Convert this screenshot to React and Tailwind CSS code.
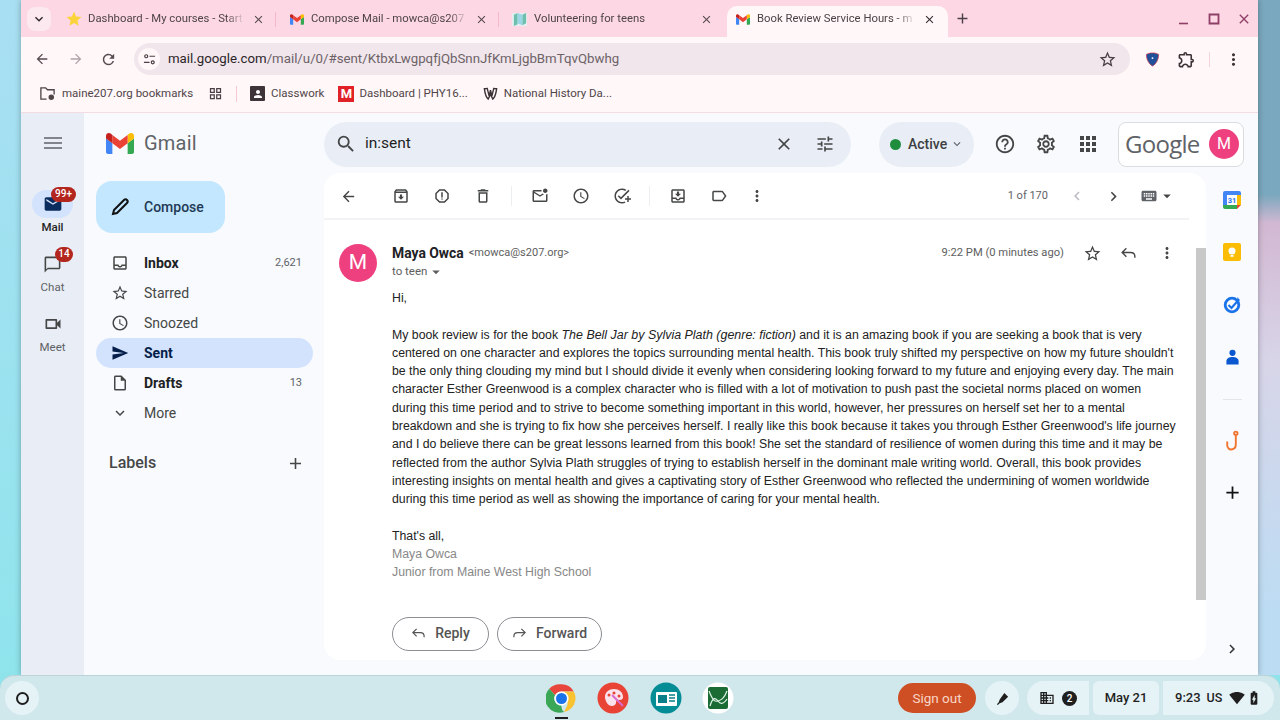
import React from "react";
import {
  MdArrowBack, MdArrowForward, MdRefresh, MdStarBorder, MdOutlineExtension, MdMoreVert, MdClose, MdAdd, MdKeyboardArrowDown,
  MdSearch, MdTune, MdHelpOutline, MdOutlineSettings, MdApps, MdOutlineArchive, MdOutlineReport, MdOutlineDelete,
  MdOutlineMarkEmailUnread, MdOutlineSchedule, MdOutlineAddTask, MdOutlineMoveToInbox, MdOutlineLabel, MdChevronLeft, MdChevronRight,
  MdKeyboard, MdArrowDropDown, MdOutlineInbox, MdSend, MdOutlineInsertDriveFile, MdOutlineChatBubbleOutline, MdOutlineVideocam, MdMail,
  MdSignalWifi4Bar, MdBatteryChargingFull, MdOutlineDomain, MdOutlineGridView, MdPerson, MdStar,
} from "react-icons/md";

const roboto = "font-['Roboto','Liberation_Sans',sans-serif]";

function GmailM({ className }) {
  return (
    <svg viewBox="52 42 88 66" className={className}>
      <path fill="#4285f4" d="M58 108h14V74L52 59v43c0 3.32 2.69 6 6 6" />
      <path fill="#34a853" d="M120 108h14c3.32 0 6-2.69 6-6V59l-20 15" />
      <path fill="#fbbc04" d="M120 48v26l20-15v-8c0-7.42-8.47-11.65-14.4-7.2" />
      <path fill="#ea4335" d="M72 74V48l24 18 24-18v26L96 92" />
      <path fill="#c5221f" d="M52 51v8l20 15V48l-5.6-4.2c-5.94-4.45-14.4-.22-14.4 7.2" />
    </svg>
  );
}

function Tab({ w, icon, title, active, sep, titleW = 155 }) {
  return (
    <div className={`h-[31px] pb-[5px] flex items-center shrink-0 ${active ? "bg-[#fff7f8] rounded-t-[10px]" : ""}`} style={{ width: w }}>
      <div className={`w-[15px] h-[15px] ml-[7px] shrink-0 flex items-center justify-center ${active ? "ml-[8px]" : ""}`}>{icon}</div>
      <div className="ml-[7px] overflow-hidden whitespace-nowrap text-[11.3px] text-[#4d4347] [mask-image:linear-gradient(to_right,black_88%,transparent)]" style={{ width: titleW }}>{title}</div>
      <MdClose className={`ml-[7px] shrink-0 w-[13px] h-[13px] ${active ? "text-[#332d30]" : "text-[#554a4f]"}`} />
      {sep && <div className="ml-[10px] w-[1px] h-[15px] bg-[#f3b9cb]" />}
    </div>
  );
}

function Bookmark({ icon, text, cls = "" }) {
  return (
    <div className={`flex items-center gap-[5px] text-[11.5px] text-[#4f4548] whitespace-nowrap ${cls}`}>
      {icon}
      <span>{text}</span>
    </div>
  );
}

function Tabs() {
  return (
    <div className={`h-[37px] bg-[#fdd7e4] flex items-end ${roboto} relative`}>
      <div className="w-[24px] h-[24px] mb-[6px] ml-[6px] mr-[6px] rounded-[8px] bg-[#fce8ef] flex items-center justify-center shrink-0">
        <MdKeyboardArrowDown className="w-[16px] h-[16px] text-[#2c2629]" />
      </div>
      <div className="flex items-center pb-0 pl-[2px]">
        <Tab w={223} sep title="Dashboard - My courses - Start" titleW={157} icon={<MdStar className="w-[18px] h-[18px] shrink-0 text-[#fbd43c]" />} />
        <Tab w={223} sep title="Compose Mail - mowca@s207" titleW={157} icon={<GmailM className="w-[14px] h-[11px]" />} />
        <Tab w={215} title="Volunteering for teens" titleW={159} icon={
          <svg viewBox="0 0 16 16" className="w-[15px] h-[15px]"><path fill="#e5eef0" d="M0 1h16v14H0z" /><path fill="#6dbfae" d="M2 3l4-2v12l-4 2zM11 3l4-2v11l-4 2z" /><path fill="#9ad6e4" d="M6 1l5 2v11l-5-2z" /></svg>
        } />
        <div className="w-[7px]" />
        <Tab w={221} active title="Book Review Service Hours - m" titleW={159} icon={<GmailM className="w-[14px] h-[11px]" />} />
      </div>
      <MdAdd className="w-[17px] h-[17px] text-[#4a3f44] ml-[6px] mb-[10px]" />
      <div className="flex-1" />
      <div className="flex items-center gap-[14px] pr-[6px] mb-[10px] text-[#8e3f66]">
        <svg viewBox="0 0 16 16" className="w-[16px] h-[16px]"><path d="M3 12.5h9" stroke="currentColor" strokeWidth="1.6" /></svg>
        <svg viewBox="0 0 16 16" className="w-[16px] h-[16px]"><path d="M3.5 3.5h9v9h-9z" fill="none" stroke="currentColor" strokeWidth="1.8" /></svg>
        <MdClose className="w-[16px] h-[16px]" />
      </div>
    </div>
  );
}

function Toolbar() {
  return (
    <div className={`h-[38px] bg-[#fff7f8] flex items-center ${roboto}`}>
      <div className="flex items-center w-[113px] pl-[13px] gap-[7px] pt-[6px] text-[#554a4f]">
        <MdArrowBack className="w-[16px] h-[16px] ml-0" />
        <MdArrowForward className="w-[16px] h-[16px] ml-[11px] text-[#b0a4a9]" />
        <MdRefresh className="w-[17px] h-[17px] ml-[9px]" />
      </div>
      <div className="w-[996px] h-[32px] mt-[6px] rounded-full bg-[#f0e6ec] flex items-center">
        <div className="w-[22px] h-[22px] rounded-full bg-[#fff7f8] ml-[4px] flex items-center justify-center">
          <svg viewBox="0 0 14 14" className="w-[13px] h-[13px]" fill="none" stroke="#4a3f44" strokeWidth="1.3"><circle cx="3.5" cy="3.5" r="1.6" /><path d="M7 3.5h6M1 10h6" /><circle cx="10.5" cy="10" r="1.6" /></svg>
        </div>
        <div className="ml-[8px] text-[13.26px] text-[#6d6267] whitespace-nowrap"><span className="text-[#2b2528]">mail.google.com</span>/mail/u/0/#sent/KtbxLwgpqfjQbSnnJfKmLjgbBmTqvQbwhg</div>
        <div className="flex-1" />
        <MdStarBorder className="w-[19px] h-[19px] text-[#4a3f44] mr-[13px]" />
      </div>
      <div className="flex items-center pt-[6px] ml-[15px]">
        <svg viewBox="0 0 16 16" className="w-[15px] h-[15px]"><path d="M8 1c3 0 5 .7 6.5 1.6C14.5 8 12 12.500 8 15 4 12.500 1.500 8 1.500 2.600 3 1.700 5 1 8 1z" fill="#21509a" stroke="#c23a4e" strokeWidth=".8" /><circle cx="8" cy="6.500" r="1" fill="#fff" /></svg>
        <MdOutlineExtension className="w-[19px] h-[19px] text-[#3b3236] ml-[17px]" />
        <div className="w-[1px] h-[15px] bg-[#f3d3dd] ml-[13px]" />
        <MdMoreVert className="w-[19px] h-[19px] text-[#3b3236] ml-[14px]" />
      </div>
    </div>
  );
}

function Bookmarks() {
  return (
    <div className={`h-[38px] bg-[#fff7f8] border-b border-[#f3dde3] flex items-center pl-[18px] ${roboto}`}>
      <Bookmark text="maine207.org bookmarks" cls="gap-[6px]" icon={
        <svg viewBox="0 0 18 18" className="w-[17px] h-[17px]" fill="none" stroke="#4f4548" strokeWidth="1.4"><path d="M8 15H2V3h5l2 2h7v5" /><circle cx="13" cy="13" r="2.200" fill="#4f4548" /></svg>
      } />
      <MdOutlineGridView className="w-[15px] h-[15px] text-[#4a3f44] ml-[15px]" />
      <div className="w-[1px] h-[16px] bg-[#f3c9d6] ml-[13px]" />
      <Bookmark cls="ml-[13px] gap-[6px]" text="Classwork" icon={<span className="w-[15px] h-[15px] bg-[#3c3438] rounded-[1px] flex items-center justify-center"><MdPerson className="w-[12px] h-[12px] text-white" /></span>} />
      <Bookmark cls="ml-[14px]" text="Dashboard | PHY16..." icon={<span className="w-[16px] h-[16px] bg-[#e02128] text-white font-bold text-[13px] leading-[16px] text-center">M</span>} />
      <Bookmark cls="ml-[15px] gap-[6px]" text="National History Da..." icon={
        <svg viewBox="0 0 16 16" className="w-[15px] h-[15px]" fill="none" stroke="#3b3236" strokeWidth="1.500"><path d="M1.500 3c1 0 2-.5 3-.5l2 8 1.500-6 1.500 6 2-8c1 0 2 .5 3 .5-.5 4-2 9-4 11l-2.500-5-2.500 5C3.500 12 2 7 1.500 3z" /></svg>
      } />
    </div>
  );
}

function RailItem({ icon, label, pill, badge, badgeCls, labelCls = "text-[#5e6165]" }) {
  return (
    <div className="flex flex-col items-center relative">
      <div className={`w-[41px] h-[28px] rounded-full flex items-center justify-center ${pill ? "bg-[#d3e3fd]" : ""}`}>{icon}</div>
      <div className={`text-[11.5px] leading-[14px] mt-[2px] ${labelCls}`}>{label}</div>
      {badge && <div className={`absolute bg-[#b3261e] text-white rounded-full text-[10px] font-medium h-[14px] leading-[14px] text-center border-0 ${badgeCls}`}>{badge}</div>}
    </div>
  );
}

function Rail() {
  return (
    <div className={`w-[63px] bg-[#e9eef6] flex flex-col items-center shrink-0 ${roboto}`}>
      <svg viewBox="0 0 18 12" className="w-[18px] h-[12px] mt-[24px]" stroke="#5f6368" strokeWidth="1.500"><path d="M0 1h18M0 6h18M0 11h18" /></svg>
      <div className="mt-[41px] flex flex-col gap-[16px]">
        <RailItem pill label="Mail" labelCls="text-[#1f1f1f] font-medium" icon={<MdMail className="w-[20px] h-[20px] text-[#0b2c5e]" />} badge="99+" badgeCls="w-[25px] -top-[3px] left-[19px] h-[15px]" />
        <RailItem label="Chat" icon={<MdOutlineChatBubbleOutline className="w-[19px] h-[19px] text-[#444746]" />} badge="14" badgeCls="w-[18px] h-[15px] -top-[3px] left-[23px]" />
        <RailItem label="Meet" icon={<MdOutlineVideocam className="w-[20px] h-[20px] text-[#444746]" />} />
      </div>
    </div>
  );
}

function NavItem({ icon, label, count, bold, active }) {
  return (
    <div className={`h-[30px] flex items-center rounded-full pl-[14px] pr-[11px] text-[14px] ${active ? "bg-[#d3e3fd] text-[#041e49] font-bold" : bold ? "text-[#202124] font-bold" : "text-[#444746]"}`}>
      <div className="w-[20px] h-[20px] flex items-center justify-center shrink-0">{icon}</div>
      <span className="ml-[14px] flex-1">{label}</span>
      {count && <span className="text-[11px] font-normal text-[#5f6368]">{count}</span>}
    </div>
  );
}

function Nav() {
  const ic = "w-[18px] h-[18px] text-[#444746]";
  return (
    <div className={`w-[240px] shrink-0 ${roboto}`}>
      <div className="h-[60px] flex items-center pl-[22px]">
        <GmailM className="w-[28px] h-[21px]" />
        <span className="ml-[10px] text-[20px] text-[#5f6368] tracking-[0.01em]">Gmail</span>
      </div>
      <div className="ml-[12px] mt-[8px] w-[129px] h-[52px] rounded-[16px] bg-[#c2e7ff] flex items-center pl-[14px]">
        <svg viewBox="0 0 20 20" className="w-[20px] h-[20px]" fill="none" stroke="#111" strokeWidth="2"><path d="M3 17l1-4L14 3c1-1 2-1 3 0s1 2 0 3L7 16z" /></svg>
        <span className="ml-[14px] text-[14px] font-medium text-[#1f3a54]">Compose</span>
      </div>
      <div className="ml-[12px] mr-[11px] mt-[15px]">
        <NavItem bold label="Inbox" count="2,621" icon={<MdOutlineInbox className={ic} />} />
        <NavItem label="Starred" icon={<MdStarBorder className={ic} />} />
        <NavItem label="Snoozed" icon={<MdOutlineSchedule className={ic} />} />
        <NavItem active label="Sent" icon={<MdSend className="w-[18px] h-[18px] text-[#041e49]" />} />
        <NavItem bold label="Drafts" count="13" icon={<MdOutlineInsertDriveFile className={ic} />} />
        <NavItem label="More" icon={<MdKeyboardArrowDown className={ic} />} />
      </div>
      <div className="ml-[25px] mr-[19px] mt-[20px] h-[30px] flex items-center justify-between text-[16px] text-[#444746]">
        <span className="font-medium">Labels</span>
        <MdAdd className="w-[19px] h-[19px]" />
      </div>
    </div>
  );
}

function Header() {
  return (
    <div className={`h-[60px] pt-[2px] flex items-center ${roboto}`}>
      <div className="w-[527px] h-[45px] rounded-full bg-[#e9eef6] flex items-center pl-[11px] pr-[16px]">
        <MdSearch className="w-[22px] h-[22px] text-[#444746]" />
        <span className="ml-[8px] text-[15.5px] text-[#1f1f1f]">in:sent</span>
        <div className="flex-1" />
        <MdClose className="w-[20px] h-[20px] text-[#444746]" />
        <MdTune className="w-[20px] h-[20px] text-[#444746] ml-[21px]" />
      </div>
      <div className="ml-[28px] w-[95px] h-[45px] rounded-full bg-[#e9eef6] flex items-center pl-[11px]">
        <span className="w-[11px] h-[11px] rounded-full bg-[#1e8e3e]" />
        <span className="ml-[7px] text-[14px] font-medium text-[#3c4043]">Active</span>
        <MdKeyboardArrowDown className="ml-[3px] w-[14px] h-[14px] text-[#5f6368]" />
      </div>
      <MdHelpOutline className="ml-[20px] w-[22px] h-[22px] text-[#444746]" />
      <MdOutlineSettings className="ml-[19px] w-[22px] h-[22px] text-[#444746]" />
      <MdApps className="ml-[19px] w-[24px] h-[24px] text-[#444746]" />
      <div className="ml-[18px] w-[126px] h-[45px] rounded-[8px] border border-[#dadce0] bg-white flex items-center pl-[6px]">
        <span className="w-[84px] text-[24px] font-medium text-[#5f6368] tracking-[-0.03em] font-['Open_Sans',sans-serif]">Google</span>
        <span className="w-[30px] h-[30px] rounded-full bg-[#ee3f7f] text-white text-[16px] flex items-center justify-center">M</span>
      </div>
    </div>
  );
}

function TbIcon({ children, cls = "w-[41px]" }) {
  return <div className={`flex items-center justify-center text-[#444746] ${cls}`}>{children}</div>;
}

function MsgToolbar() {
  const ic = "w-[18px] h-[18px]";
  return (
    <div className="h-[47px] flex items-center border-b-2 border-[#f1f3f4] mr-[17px] shrink-0 pt-[1px]">
      <MdArrowBack className="ml-[16px] w-[17px] h-[17px] text-[#444746]" />
      <div className="flex ml-[23px]">
        <TbIcon><MdOutlineArchive className={ic} /></TbIcon>
        <TbIcon><MdOutlineReport className={ic} /></TbIcon>
        <TbIcon><MdOutlineDelete className={ic} /></TbIcon>
      </div>
      <div className="w-[1px] h-[20px] bg-[#eceff1] ml-[8px]" />
      <div className="flex ml-[7px]">
        <TbIcon><MdOutlineMarkEmailUnread className={ic} /></TbIcon>
        <TbIcon><MdOutlineSchedule className={ic} /></TbIcon>
        <TbIcon><MdOutlineAddTask className={ic} /></TbIcon>
      </div>
      <div className="w-[1px] h-[20px] bg-[#eceff1] ml-[7px]" />
      <div className="flex ml-[7px]">
        <TbIcon><MdOutlineMoveToInbox className={ic} /></TbIcon>
        <TbIcon><MdOutlineLabel className={ic} /></TbIcon>
        <TbIcon cls="w-[35px]"><MdMoreVert className={ic} /></TbIcon>
      </div>
      <div className="flex-1" />
      <span className="text-[11px] mr-[1px] text-[#5f6368]">1 of 170</span>
      <MdChevronLeft className="ml-[19px] w-[18px] h-[18px] text-[#b8bcc0]" />
      <MdChevronRight className="ml-[18px] w-[19px] h-[19px] text-[#444746]" />
      <MdKeyboard className="ml-[17px] w-[18px] h-[18px] text-[#5f6368]" />
      <MdArrowDropDown className="w-[18px] h-[18px] text-[#444746]" />
      <div className="w-[13px]" />
    </div>
  );
}

const bodyLines = [
  <>My book review is for the book <i className="text-[12.45px]">The Bell Jar by Sylvia Plath (genre: fiction)</i> and it is an amazing book if you are seeking a book that is very</>,
  "centered on one character and explores the topics surrounding mental health. This book truly shifted my perspective on how my future shouldn't",
  "be the only thing clouding my mind but I should divide it evenly when considering looking forward to my future and enjoying every day. The main",
  "character Esther Greenwood is a complex character who is filled with a lot of motivation to push past the societal norms placed on women",
  "during this time period and to strive to become something important in this world, however, her pressures on herself set her to a mental",
  "breakdown and she is trying to fix how she perceives herself. I really like this book because it takes you through Esther Greenwood's life journey",
  "and I do believe there can be great lessons learned from this book! She set the standard of resilience of women during this time and it may be",
  "reflected from the author Sylvia Plath struggles of trying to establish herself in the dominant male writing world. Overall, this book provides",
  "interesting insights on mental health and gives a captivating story of Esther Greenwood who reflected the undermining of women worldwide",
  "during this time period as well as showing the importance of caring for your mental health.",
];

function ReplyGlyph({ flip, className }) {
  return (
    <svg viewBox="0 0 16 16" className={className} fill="none" stroke="currentColor" strokeWidth="1.300" style={flip ? { transform: "scaleX(-1)" } : undefined}>
      <path d="M6 3L2 7l4 4M2 7h8c2.500 0 4 1.500 4 4v1" />
    </svg>
  );
}

function Message() {
  return (
    <div className="flex-1 flex min-h-0">
      <div className="flex-1 min-w-0">
        <div className="flex pl-[15px] pt-[24px]">
          <div className="w-[38px] h-[38px] rounded-full bg-[#ee3f7f] text-white text-[21px] flex items-center justify-center shrink-0">M</div>
          <div className="ml-[15px] flex-1 -mt-[1px]">
            <div className="flex items-center h-[20px] pr-[20px]">
              <span className="text-[13.9px] font-bold text-[#202124]">Maya Owca</span>
              <span className="ml-[5px] text-[11px] text-[#5e5e5e]">&lt;mowca@s207.org&gt;</span>
              <div className="flex-1" />
              <span className="text-[11.2px] text-[#5e5e5e]">9:22 PM (0 minutes ago)</span>
              <MdStarBorder className="ml-[19px] w-[19px] h-[19px] text-[#444746]" />
              <ReplyGlyph className="ml-[18px] w-[17px] h-[17px] text-[#444746]" />
              <MdMoreVert className="ml-[21px] w-[18px] h-[18px] text-[#444746]" />
            </div>
            <div className="flex items-center h-[16px] mt-[1px] text-[11.5px] text-[#5e5e5e]">
              to teen<MdArrowDropDown className="w-[18px] h-[18px]" />
            </div>
            <div className="mt-[9px] font-['Liberation_Sans',sans-serif] text-[12.3px] leading-[18.3px] text-[#222222] whitespace-nowrap">
              <div>Hi,</div>
              <div className="mt-[18.3px]">{bodyLines.map((l, i) => <div key={i}>{l}</div>)}</div>
              <div className="mt-[18.3px]">That's all,</div>
              <div className="text-[#888888]">Maya Owca</div>
              <div className="text-[#888888]">Junior from Maine West High School</div>
            </div>
            <div className="flex gap-[8px] mt-[35px] text-[14px] text-[#555555]">
              <div className="w-[97px] h-[34px] rounded-full border border-[#8a8d91] flex items-center justify-center gap-[9px] font-medium">
                <ReplyGlyph className="w-[15px] h-[15px]" /><span>Reply</span>
              </div>
              <div className="w-[105px] h-[34px] rounded-full border border-[#8a8d91] flex items-center justify-center gap-[9px] font-medium">
                <ReplyGlyph flip className="w-[15px] h-[15px]" /><span>Forward</span>
              </div>
            </div>
          </div>
        </div>
      </div>
      <div className="w-[10px] shrink-0 pt-[28px]">
        <div className="h-[352px] bg-[#c8c8c8]" />
      </div>
    </div>
  );
}

function SidePanel() {
  return (
    <div className="w-[52px] shrink-0 flex flex-col items-center pt-[18px]">
      <svg viewBox="0 0 18 18" className="w-[18px] h-[18px]">
        <path fill="#4285f4" d="M2 0h14a2 2 0 0 1 2 2v2H0V2a2 2 0 0 1 2-2z" /><path fill="#4285f4" d="M0 4h4v10H0z" />
        <path fill="#fbbc04" d="M14 4h4v10h-4z" /><path fill="#34a853" d="M0 14h14v4H2a2 2 0 0 1-2-2z" /><path fill="#ea4335" d="M14 14h4l-4 4z" />
        <path fill="#fff" d="M4 4h10v10H4z" /><text x="9" y="12" textAnchor="middle" fontSize="7.500" fontWeight="700" fill="#1a73e8" fontFamily="Roboto">31</text>
      </svg>
      <svg viewBox="0 0 18 18" className="w-[18px] h-[18px] mt-[34px]">
        <rect width="18" height="18" rx="2" fill="#fbbc04" /><circle cx="9" cy="8" r="3.500" fill="#fff" /><rect x="7.500" y="12" width="3" height="1.800" fill="#fff" />
      </svg>
      <svg viewBox="0 0 18 18" className="w-[18px] h-[18px] mt-[35px]" fill="none">
        <circle cx="9" cy="9" r="6.800" stroke="#1a73e8" strokeWidth="2.800" /><path d="M5.500 9l3 3 7-8" stroke="#1a73e8" strokeWidth="2.200" /><path d="M14 1l3 3-2 2" fill="#1a73e8" />
      </svg>
      <svg viewBox="0 0 16 18" className="w-[15px] h-[18px] mt-[34px]">
        <circle cx="8" cy="4.500" r="3.300" fill="#0b57d0" /><path d="M1.500 17v-3.500c0-3 3-4.500 6.500-4.500s6.500 1.500 6.500 4.500V17z" fill="#0b57d0" />
      </svg>
      <div className="w-[19px] h-[1px] bg-[#e3e5e8] mt-[33px]" />
      <svg viewBox="0 0 16 22" className="w-[16px] h-[21px] mt-[30px]" fill="none" stroke="#f2752f" strokeWidth="2"><circle cx="12" cy="3.500" r="1.800" /><path d="M12 6v9c0 7-9 7-9 1v-4" /></svg>
      <MdAdd className="w-[21px] h-[21px] text-[#111] mt-[31px]" />
      <div className="flex-1" />
      <MdChevronRight className="w-[18px] h-[18px] text-[#333] mb-[17px]" />
    </div>
  );
}

function Gmail() {
  return (
    <div className={`flex-1 min-h-0 flex bg-[#f8fafd] ${roboto}`}>
      <Rail />
      <Nav />
      <div className="flex-1 min-w-0 flex flex-col">
        <Header />
        <div className="flex-1 min-h-0 flex">
          <div className="w-[882px] h-[487px] bg-white rounded-[16px] flex flex-col overflow-hidden shrink-0">
            <MsgToolbar />
            <Message />
          </div>
          <SidePanel />
        </div>
      </div>
    </div>
  );
}

function Chrome() {
  return (
    <svg viewBox="0 0 48 48" className="w-[31px] h-[31px]">
      <path fill="#e8453c" d="M24 2a22 22 0 0 1 19 11H24a11 11 0 0 0-10 6L5 9A22 22 0 0 1 24 2z" />
      <path fill="#3aa757" d="M5 9l9 10a11 11 0 0 0 10 16 11 11 0 0 0 4 10A22 22 0 0 1 5 9z" />
      <path fill="#f9c230" d="M34 24a10 10 0 0 0-10-11h19a22 22 0 0 1-15 32l5-10z" />
      <circle cx="24" cy="24" r="11" fill="#fff" /><circle cx="24" cy="24" r="8.500" fill="#1a73e8" />
    </svg>
  );
}

function Shelf() {
  return (
    <div className={`h-[45px] rounded-t-[14px] bg-[#d0e7eb] border-t border-[#bcd3d8] flex items-center ${roboto} relative`}>
      <div className="ml-[5px] w-[34px] h-[34px] rounded-full bg-[#e6f3f6] flex items-center justify-center shrink-0">
        <span className="w-[13px] h-[13px] rounded-full border-2 border-[#1f1f1f]" />
      </div>
      <div className="ml-[507px] w-[31px] flex flex-col items-center relative">
        <Chrome />
        <div className="absolute -bottom-[5px] w-[13px] h-[2px] bg-[#1f1f1f]" />
      </div>
      <svg viewBox="0 0 32 32" className="ml-[20px] w-[32px] h-[32px]">
        <circle cx="16" cy="16" r="15.500" fill="#e84335" /><path d="M8 15c0-5 4-8 9-8s9 3 9 8c0 3-3 3-5 3s-2 2-2 3-2 3-4 3c-4 0-7-5-7-9z" fill="#fbe3ee" />
        <circle cx="12" cy="13" r="1.500" fill="#e84335" /><circle cx="17" cy="11" r="1.500" fill="#e84335" /><circle cx="22" cy="14" r="1.500" fill="#e84335" /><path d="M15 13l11 11" stroke="#d96ad0" strokeWidth="2" />
      </svg>
      <svg viewBox="0 0 32 32" className="ml-[21px] w-[32px] h-[32px]">
        <circle cx="16" cy="16" r="15.500" fill="#058d96" /><rect x="6" y="10" width="21" height="14" rx="1" fill="#fff" /><rect x="8" y="13" width="9" height="8" fill="#0a7f88" /><path d="M19 13h6M19 16h6M19 19h6" stroke="#0a7f88" strokeWidth="1.500" />
      </svg>
      <svg viewBox="0 0 32 32" className="ml-[20px] w-[32px] h-[32px]">
        <circle cx="16" cy="16" r="15.500" fill="#fff" /><rect x="6" y="5" width="20" height="22" rx="2" fill="#1b6b35" /><path d="M7 9c4 10 6 11 9 10s6-2 9-10M8 24c3-10 6-8 8-5s5 4 9-2" stroke="#dff5e6" strokeWidth="1.200" fill="none" />
      </svg>
      <div className="flex-1" />
      <div className="w-[78px] h-[30px] rounded-full bg-[#cf4f24] text-[#f8d6c6] text-[13.500px] flex items-center justify-center">Sign out</div>
      <div className="ml-[9px] w-[34px] h-[34px] rounded-full bg-[#e6f3f6] flex items-center justify-center">
        <svg viewBox="0 0 16 16" className="w-[15px] h-[15px]" fill="#1f1f1f"><path d="M10 2l4 4-6 6-3 1-2 2-1-1 2-2 1-3z" /></svg>
      </div>
      <div className="ml-[8px] w-[62px] h-[34px] rounded-l-full rounded-r-[6px] bg-[#e6f3f6] flex items-center pl-[12px] gap-[7px]">
        <MdOutlineDomain className="w-[16px] h-[16px] text-[#1f1f1f]" />
        <span className="w-[15px] h-[15px] rounded-full bg-[#1f1f1f] text-white text-[10px] font-medium flex items-center justify-center">2</span>
      </div>
      <div className="ml-[4px] w-[66px] h-[34px] rounded-[6px] bg-[#e6f3f6] flex items-center justify-center text-[13px] font-medium text-[#1f1f1f]">May 21</div>
      <div className="ml-[4px] mr-[6px] w-[111px] h-[34px] rounded-r-full rounded-l-[6px] bg-[#e6f3f6] flex items-center pl-[12px] text-[13px] font-medium text-[#1f1f1f]">
        <span>9:23</span>
        <span className="ml-[6px] text-[12.500px]">US</span>
        <MdSignalWifi4Bar className="ml-[7px] w-[16px] h-[16px]" />
        <MdBatteryChargingFull className="ml-[1px] w-[16px] h-[16px]" />
      </div>
    </div>
  );
}

export default function App() {
  return (
    <div className="w-[1280px] h-[720px] overflow-hidden flex flex-col bg-[linear-gradient(180deg,#7aa8be_0%,#7aa8be_27%,#d2b8d2_31%,#d8d5e8_50%,#bcdcf3_85%,#bcdcf3_100%)]">
      <div className="h-[675px] flex shrink-0">
        <div className="w-[21px] shrink-0 bg-[linear-gradient(180deg,#a9dff2,#8fe4ec)]" />
        <div className="w-[1237px] shrink-0 flex flex-col shadow-[0_0_6px_rgba(0,0,0,0.3)]">
          <Tabs />
          <Toolbar />
          <Bookmarks />
          <Gmail />
        </div>
      </div>
      <div className="h-[45px] shrink-0 bg-[#8fe4ec]">
        <Shelf />
      </div>
    </div>
  );
}
